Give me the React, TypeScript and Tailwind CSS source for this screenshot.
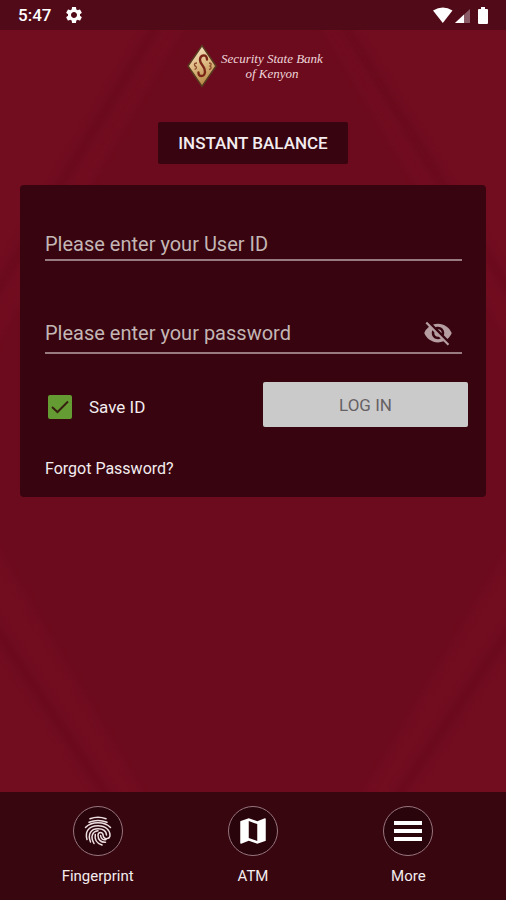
import { useState } from "react";
import type { ReactNode } from "react";
import { MdMap, MdSettings, MdVisibilityOff } from "react-icons/md";

function Backdrop() {
  return (
    <svg
      className="absolute inset-0 h-full w-full"
      viewBox="0 0 506 900"
      preserveAspectRatio="none"
      aria-hidden="true"
    >
      <defs>
        <filter id="soften" x="-10%" y="-10%" width="120%" height="120%" colorInterpolationFilters="sRGB">
          <feGaussianBlur stdDeviation="4" />
        </filter>
      </defs>
      <rect width="506" height="900" fill="#720d20" />
      <path d="M253 -90 L570 445 L253 980 L-64 445 Z" fill="#6c0b1d" filter="url(#soften)" />
      <g fill="none" stroke="#6a0a1c" strokeWidth="10" filter="url(#soften)">
        <path d="M160 20 L-20 318" />
        <path d="M340 20 L526 318" />
        <path d="M-20 605 L170 890" />
        <path d="M526 605 L335 890" />
      </g>
    </svg>
  );
}

function StatusBar() {
  return (
    <div className="flex h-[30px] items-center bg-[#500a18] px-[18px] text-white">
      <span className="text-[17px] leading-5 font-medium">5:47</span>
      <MdSettings className="ml-[13px] size-5" aria-hidden="true" />
      <svg className="ml-auto h-5 w-[60px]" viewBox="0 0 60 20" aria-hidden="true">
        <path d="M5 5.500Q15 -0.500 24.500 5.500L14.800 18Z" fill="#fff" />
        <path d="M27 18L42 4V18Z" fill="#8a5c67" />
        <path d="M27 18L36 9.500V18Z" fill="#fff" />
        <path d="M53 2h4v2h2q1 0 1 1v13q0 1-1 1h-8q-1 0-1-1V5q0-1 1-1h2Z" fill="#fff" />
      </svg>
    </div>
  );
}

function Logo() {
  return (
    <div className="flex items-center justify-center gap-1 pl-1">
      <svg className="h-11 w-[30px]" viewBox="0 0 30 44" aria-hidden="true">
        <defs>
          <linearGradient id="gold" x1="0" y1="0" x2="0.300" y2="1">
            <stop offset="0" stopColor="#f8ead0" />
            <stop offset="0.500" stopColor="#e2bf8a" />
            <stop offset="1" stopColor="#b98a4a" />
          </linearGradient>
        </defs>
        <path d="M15 1.500L29 22L15 42.500L1 22Z" fill="url(#gold)" stroke="#57391f" strokeWidth="1.500" />
        <path
          d="M20 15.500C20 9.500 13 10.500 13 16C13 21 18.500 22 18 28C17.500 33.500 11 33 11.500 28.500"
          fill="none"
          stroke="#7b2519"
          strokeWidth="2.400"
          strokeLinecap="round"
        />
        <path
          d="M10 19C6.500 19 7 22 9 22.500C10 24 9 25.500 7.500 25M22 19C25 19 24.500 22 22.500 22C25 22.500 24.500 25.500 22 25.500"
          fill="none"
          stroke="#8d4a2c"
          strokeWidth="1.300"
        />
      </svg>
      <p className="text-center font-['Liberation_Serif',serif] text-[13px] leading-[15px] text-[#eed6da] italic">
        Security State Bank
        <br />
        of Kenyon
      </p>
    </div>
  );
}

function Fingerprint() {
  return (
    <svg
      className="h-[30px] w-7"
      viewBox="0 0 28 30"
      fill="none"
      stroke="#eee0e2"
      strokeWidth="1.500"
      strokeLinecap="round"
      aria-hidden="true"
    >
      <path d="M6 2.800Q14 -0.200 22 2.800" />
      <path d="M5 6.200Q14 2.800 23 6.200" />
      <path d="M1.500 11.500C7 5 21 5 26.500 11.500" />
      <path d="M3 23.500C1 17 3.500 9.800 14 9.800C22 9.800 26 14.500 26 19C26 23.500 19.500 24 19.200 19.500C18.800 15.500 14 15.500 14 19.500C14 24 17 26.500 21.500 26.300" />
      <path d="M6.500 26C3.500 18.500 6.500 12.700 14 12.700C19.500 12.700 22.300 15.500 22.500 19" />
      <path d="M10 27.500C6 20.500 8.500 15.500 14 14.800" />
      <path d="M18 29C12 27 10.500 22.500 11.300 18.500" />
      <path d="M16.600 19.500C16.800 23 19.500 24.200 22 23.500" />
    </svg>
  );
}

function MenuBars() {
  return (
    <svg className="h-5 w-7" viewBox="0 0 28 20" fill="#fff" aria-hidden="true">
      <rect width="28" height="4" />
      <rect y="8" width="28" height="4" />
      <rect y="16" width="28" height="4" />
    </svg>
  );
}

function NavItem({ label, children }: { label: string; children: ReactNode }) {
  return (
    <button type="button" className="flex flex-1 flex-col items-center gap-[10px]">
      <span className="flex size-[50px] items-center justify-center rounded-full border border-[#98757e] bg-black/25">
        {children}
      </span>
      <span className="text-[15px] leading-5">{label}</span>
    </button>
  );
}

export default function App() {
  const [saveId, setSaveId] = useState(true);
  const [visible, setVisible] = useState(false);

  return (
    <div className="relative isolate flex min-h-screen flex-col bg-[#6c0b1d] font-[Roboto,sans-serif] text-[#f3ecee]">
      <div className="absolute inset-0 -z-10 overflow-hidden">
        <Backdrop />
      </div>
      <StatusBar />

      <main className="flex flex-1 flex-col px-5 pt-[14px]">
        <Logo />
        <button
          type="button"
          className="mt-[34px] h-[42px] self-center rounded-xs bg-[#37040f] px-[20px] text-[17px] leading-5 font-medium"
        >
          INSTANT BALANCE
        </button>

        <form
          className="mt-[21px] rounded-sm bg-[#37040f] pt-11 pr-[18px] pb-4 pl-[25px]"
          onSubmit={(event) => event.preventDefault()}
        >
          <div className="mr-1.5 border-b-2 border-[#977b80]">
            <input
              type="text"
              aria-label="User ID"
              placeholder="Please enter your User ID"
              className="block h-[30px] w-full bg-transparent text-xl leading-6 outline-none placeholder:text-[#c3b6b5]"
            />
          </div>
          <div className="mt-[57px] mr-1.5 flex items-center border-b-2 border-[#977b80] pb-1">
            <input
              type={visible ? "text" : "password"}
              aria-label="Password"
              placeholder="Please enter your password"
              className="block h-[30px] min-w-0 flex-1 bg-transparent text-xl leading-6 outline-none placeholder:text-[#c3b6b5]"
            />
            <button
              type="button"
              aria-label="Show password"
              className="mr-[9px] text-[#b59da2]"
              onClick={() => setVisible(!visible)}
            >
              <MdVisibilityOff className="size-[30px]" />
            </button>
          </div>

          <div className="mt-7 flex items-start justify-between">
            <label className="mt-[13px] ml-[3px] flex items-center gap-[17px] text-[17px] leading-6">
              <span className="relative size-6">
                <input
                  type="checkbox"
                  checked={saveId}
                  onChange={(event) => setSaveId(event.target.checked)}
                  className="block size-6 appearance-none rounded-xs border-2 border-[#659b33] checked:bg-[#659b33]"
                />
                {saveId && (
                  <svg
                    className="pointer-events-none absolute inset-0 size-6"
                    viewBox="0 0 24 24"
                    fill="none"
                    stroke="#37200f"
                    strokeWidth="2"
                    aria-hidden="true"
                  >
                    <path d="M4 12L9.500 17L20 6.500" />
                  </svg>
                )}
              </span>
              Save ID
            </label>
            <button
              type="submit"
              className="h-[45px] w-[205px] rounded-xs bg-[#cbcacb] text-[17px] leading-5 text-[#666164]"
            >
              LOG IN
            </button>
          </div>

          <a href="#forgot" className="mt-8 inline-block text-base leading-5">
            Forgot Password?
          </a>
        </form>
      </main>

      <nav className="flex h-[108px] items-start bg-[#38060f] px-5 pt-[14px]">
        <NavItem label="Fingerprint">
          <Fingerprint />
        </NavItem>
        <NavItem label="ATM">
          <MdMap className="size-[34px] text-white" />
        </NavItem>
        <NavItem label="More">
          <MenuBars />
        </NavItem>
      </nav>
    </div>
  );
}
